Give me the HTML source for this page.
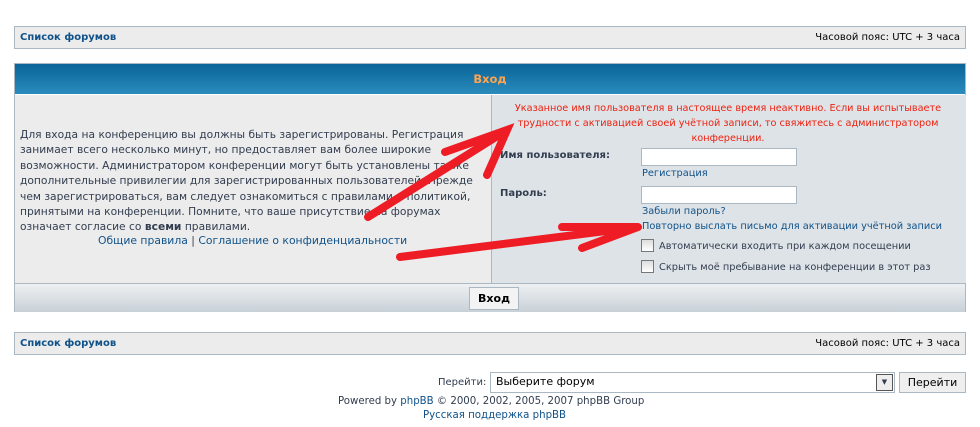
<!DOCTYPE html>
<html><head><meta charset="utf-8"><style>
body{margin:0;width:980px;height:427px;background:#fff;font-family:"DejaVu Sans","Liberation Sans",sans-serif;position:relative;overflow:hidden;color:#323d4f}
.a{position:absolute;white-space:nowrap}
.nav{position:absolute;left:14px;width:950px;height:21px;background:#ececec;border:1px solid #a9b8c2}
.nav b{position:absolute;left:5px;top:5px;font-size:10px;color:#105289}
.nav span{position:absolute;right:5px;top:5px;font-size:10px;color:#000}
.lnk{color:#105289}
input.t{position:absolute;width:154px;height:16px;border:1px solid #a9b8c2;background:#fff;padding:0;margin:0}
.cb{position:absolute;width:11px;height:11px;border:1px solid #777;background:linear-gradient(#ddd,#fff)}
</style></head><body>
<div class="nav" style="top:26px"><b>Список форумов</b><span>Часовой пояс: UTC + 3 часа</span></div>

<div style="position:absolute;left:14px;top:63px;width:950px;height:247px;border:1px solid #a9b8c2;background:#ececec">
 <div style="position:absolute;left:0;top:0;width:950px;height:30px;background:linear-gradient(#0a6497,#2a8bbd);border-bottom:1px solid #fff"></div>
 <div class="a" style="left:0;width:950px;top:8px;text-align:center;font-size:11.5px;font-weight:bold;color:#ffa34f">Вход</div>
 <div style="position:absolute;left:476px;top:31px;width:474px;height:188px;background:#dee3e7;border-left:1px solid #a9b8c2"></div>
 <div style="position:absolute;left:0;top:219px;width:950px;height:28px;border-top:1px solid #a9b8c2;background:linear-gradient(#eef0f2,#c8d1d7)"></div>
 <div style="position:absolute;left:454px;top:223px;width:48px;height:21px;background:#f3f3f3;border:1px solid #a9b8c2;font-size:11px;font-weight:bold;text-align:center;line-height:21px;color:#000">Вход</div>
</div>

<div class="a" style="left:20px;top:127px;font-size:10.7px;line-height:15.4px;color:#323d4f">Для входа на конференцию вы должны быть зарегистрированы. Регистрация<br>занимает всего несколько минут, но предоставляет вам более широкие<br>возможности. Администратором конференции могут быть установлены также<br>дополнительные привилегии для зарегистрированных пользователей. Прежде<br>чем зарегистрироваться, вам следует ознакомиться с правилами и политикой,<br>принятыми на конференции. Помните, что ваше присутствие на форумах<br>означает согласие со <b>всеми</b> правилами.</div>
<div class="a" style="left:98px;top:234px;font-size:10.8px"><span class="lnk">Общие правила</span> | <span class="lnk">Соглашение о конфиденциальности</span></div>

<div class="a" style="left:491px;width:474px;top:101px;text-align:center;font-size:9.7px;line-height:15px;color:#e21">Указанное имя пользователя в настоящее время неактивно. Если вы испытываете<br>трудности с активацией своей учётной записи, то свяжитесь с администратором<br>конференции.</div>
<div class="a" style="left:500px;top:150px;font-size:10px;font-weight:bold">Имя пользователя:</div>
<div class="a" style="left:500px;top:188px;font-size:10px;font-weight:bold">Пароль:</div>
<input class="t" style="left:641px;top:148px">
<input class="t" style="left:641px;top:186px">
<div class="a lnk" style="left:642px;top:168px;font-size:9.8px">Регистрация</div>
<div class="a lnk" style="left:642px;top:206px;font-size:9.8px">Забыли пароль?</div>
<div class="a lnk" style="left:642px;top:221px;font-size:9.8px">Повторно выслать письмо для активации учётной записи</div>
<div class="cb" style="left:641px;top:239px"></div>
<div class="a" style="left:659px;top:241px;font-size:9.8px">Автоматически входить при каждом посещении</div>
<div class="cb" style="left:641px;top:260px"></div>
<div class="a" style="left:659px;top:262px;font-size:9.8px">Скрыть моё пребывание на конференции в этот раз</div>

<svg style="position:absolute;left:0;top:0" width="980" height="427"><g stroke="#ee1c25" stroke-width="8" stroke-linecap="round" fill="none">
<path d="M368 217L507 130M445 152L507 130L487 175"/>
<path d="M400 257L638 227M562 227L638 227L582 248"/></g></svg>

<div class="nav" style="top:332px"><b>Список форумов</b><span>Часовой пояс: UTC + 3 часа</span></div>

<div class="a" style="left:438px;top:377px;font-size:10px">Перейти:</div>
<div style="position:absolute;left:490px;top:372px;width:403px;height:19px;border:1px solid #a9b8c2;background:#fff"></div>
<div class="a" style="left:496px;top:375px;font-size:11px;color:#000">Выберите форум</div>
<div style="position:absolute;left:876px;top:374px;width:15px;height:15px;border:1px solid #555;background:#eee;font-size:7px;text-align:center;line-height:15px">▼</div>
<div style="position:absolute;left:899px;top:372px;width:65px;height:19px;border:1px solid #a9b8c2;background:#efefef;font-size:11px;text-align:center;line-height:19px;color:#000">Перейти</div>
<div class="a" style="left:338px;top:396px;font-size:10.2px">Powered by <span class="lnk">phpBB</span> © 2000, 2002, 2005, 2007 phpBB Group</div>
<div class="a lnk" style="left:423px;top:410px;font-size:10.2px">Русская поддержка phpBB</div>
</body></html>
